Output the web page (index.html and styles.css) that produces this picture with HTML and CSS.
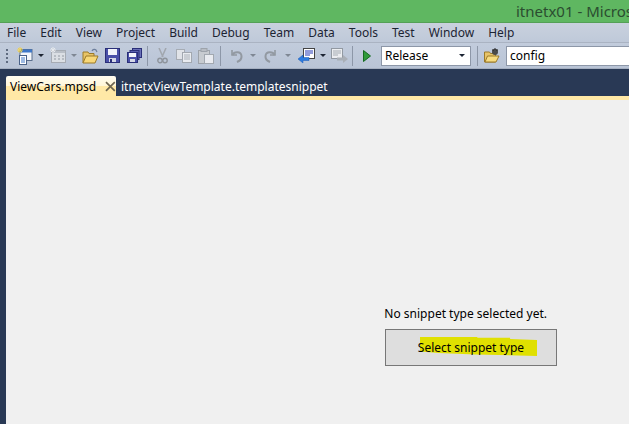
FILE: index.html
```html
<!DOCTYPE html>
<html lang="en">
<head>
    <meta charset="UTF-8">
    <title>itnetx01 - Microsoft Visual Studio</title>
    <link rel="stylesheet" href="styles.css">
</head>
<body>
    <div class="window">
        <div class="titlebar">
            <svg class="logo" width="16" height="9" viewBox="0 0 16 9">
                <path d="M8 4.5C6.5 2 5.5 1 3.8 1 2 1 1 2.5 1 4.5S2 8 3.8 8C5.5 8 6.5 7 8 4.5 9.5 2 10.5 1 12.2 1 14 1 15 2.5 15 4.5S14 8 12.2 8C10.5 8 9.5 7 8 4.5Z" fill="none" stroke="#2b3fa8" stroke-width="1.8"/>
                <path d="M1 4.5C1 6.5 2 8 3.8 8" fill="none" stroke="#2a8fa0" stroke-width="1.8"/>
            </svg>
            <span class="title-text">itnetx01 - Microsoft Visual Studio</span>
        </div>

        <div class="menubar">
            <span class="menu-item">File</span>
            <span class="menu-item">Edit</span>
            <span class="menu-item">View</span>
            <span class="menu-item">Project</span>
            <span class="menu-item">Build</span>
            <span class="menu-item">Debug</span>
            <span class="menu-item">Team</span>
            <span class="menu-item">Data</span>
            <span class="menu-item">Tools</span>
            <span class="menu-item">Test</span>
            <span class="menu-item">Window</span>
            <span class="menu-item">Help</span>
        </div>

        <div class="toolbar">
            <div class="grip"><i></i><i></i><i></i><i></i></div>

            <div class="tool">
                <svg width="17" height="18" viewBox="0 0 17 18">
                    <rect x="4" y="2.5" width="12" height="11" fill="#f4f7fb" stroke="#5b6f8c"/>
                    <rect x="4" y="2.5" width="12" height="3" fill="#3f78c8"/>
                    <rect x="3.5" y="8.5" width="7" height="9" fill="#fff" stroke="#4a6288"/>
                    <path d="M5 11h4M5 13h4M5 15h4" stroke="#3f78c8"/>
                    <path d="M1 3h6M4 0v6M2 1l4 4M6 1L2 5" stroke="#f2d24c"/>
                </svg>
            </div>
            <div class="drop drop-a"><b></b></div>

            <div class="tool faded">
                <svg width="17" height="17" viewBox="0 0 17 17">
                    <rect x="1.5" y="3.5" width="14" height="12" fill="#dfe2e6" stroke="#a4a9b0"/>
                    <rect x="2" y="4" width="13" height="2" fill="#b9bec6"/>
                    <path d="M4 9h2M8 9h2M12 9h2M4 12h2M8 12h2M12 12h2" stroke="#8e949c"/>
                    <path d="M0 3h6M3 0v6M1 1l4 4M5 1L1 5" stroke="#eceef0"/>
                </svg>
            </div>
            <div class="drop drop-b"><b class="grey"></b></div>

            <div class="tool">
                <svg width="17" height="16" viewBox="0 0 17 16">
                    <path d="M1 15V4h5l1 1.5h5V8" fill="#e8c468" stroke="#9c7a28"/>
                    <path d="M1 15l3-7h12l-3 7Z" fill="#f8d878" stroke="#9c7a28"/>
                    <path d="M10 3c1-2 3-2 4-1l1 2" fill="none" stroke="#6d7f9c" stroke-width="1.2"/>
                </svg>
            </div>
            <div class="tool">
                <svg width="15" height="15" viewBox="0 0 15 15">
                    <rect x="0.5" y="0.5" width="14" height="14" fill="#4a50a8" stroke="#2a2f78"/>
                    <rect x="3" y="1" width="9" height="6" fill="#f2f4fa"/>
                    <rect x="4" y="10" width="7" height="4" fill="#d4d8e6"/>
                    <rect x="5" y="11" width="2" height="3" fill="#2a2f78"/>
                </svg>
            </div>
            <div class="tool">
                <svg width="15" height="15" viewBox="0 0 15 15">
                    <rect x="5.5" y="0.5" width="9" height="9" fill="#6a70b8" stroke="#2a2f78"/>
                    <rect x="3" y="2.5" width="9" height="9" fill="#5a60b0" stroke="#2a2f78"/>
                    <rect x="0.5" y="4.5" width="10" height="10" fill="#4a50a8" stroke="#2a2f78"/>
                    <rect x="2" y="5" width="7" height="4" fill="#f2f4fa"/>
                    <rect x="3" y="11" width="5" height="3" fill="#d4d8e6"/>
                </svg>
            </div>

            <div class="sep"></div>

            <div class="tool faded">
                <svg width="11" height="16" viewBox="0 0 11 16">
                    <path d="M2 0l4 9M9 0L5 9" stroke="#9ea3aa" stroke-width="1.5"/>
                    <circle cx="3" cy="12.5" r="2.2" fill="none" stroke="#8a8f96" stroke-width="1.4"/>
                    <circle cx="8" cy="12.5" r="2.2" fill="none" stroke="#8a8f96" stroke-width="1.4"/>
                </svg>
            </div>
            <div class="tool faded">
                <svg width="16" height="14" viewBox="0 0 16 14">
                    <rect x="0.5" y="0.5" width="8" height="10" fill="#e4e6ea" stroke="#a4a9b0"/>
                    <rect x="6.5" y="3.5" width="9" height="10" fill="#eef0f3" stroke="#a0a5ac"/>
                    <path d="M8 6h6M8 8h6M8 10h6" stroke="#a8adb4"/>
                </svg>
            </div>
            <div class="tool faded">
                <svg width="16" height="16" viewBox="0 0 16 16">
                    <rect x="0.5" y="2.5" width="11" height="13" fill="#c9ccd0" stroke="#9a9fa6"/>
                    <rect x="3" y="0.5" width="6" height="3" fill="#b8bcc2" stroke="#9a9fa6"/>
                    <rect x="6.5" y="6.5" width="9" height="9" fill="#eef0f3" stroke="#a0a5ac"/>
                </svg>
            </div>

            <div class="sep sep-wide"></div>

            <div class="tool faded">
                <svg width="13" height="14" viewBox="0 0 13 14">
                    <path d="M2 1v5h5" fill="none" stroke="#8e949c" stroke-width="1.6"/>
                    <path d="M2.5 6C4 2.5 11 2 11.5 7c.3 3-2 5-4.5 6" fill="none" stroke="#8e949c" stroke-width="2"/>
                </svg>
            </div>
            <div class="drop drop-c"><b class="grey"></b></div>
            <div class="tool faded">
                <svg width="13" height="14" viewBox="0 0 13 14">
                    <path d="M11 1v5H6" fill="none" stroke="#8e949c" stroke-width="1.6"/>
                    <path d="M10.5 6C9 2.5 2 2 1.500 7c-.3 3 2 5 4.500 6" fill="none" stroke="#8e949c" stroke-width="2"/>
                </svg>
            </div>
            <div class="drop drop-d"><b class="grey"></b></div>

            <div class="tool">
                <svg width="17" height="16" viewBox="0 0 17 16">
                    <rect x="5.500" y="0.500" width="11" height="10" fill="#fff" stroke="#444"/>
                    <path d="M7 3h8M7 5h8M7 7h5" stroke="#2438b8"/>
                    <path d="M0 11l5-4v2.500h6v3H5V15Z" fill="#2e7ce0" stroke="#1a5ab8" stroke-width="0.500"/>
                </svg>
            </div>
            <div class="drop drop-e"><b></b></div>
            <div class="tool faded">
                <svg width="17" height="16" viewBox="0 0 17 16">
                    <rect x="0.500" y="0.500" width="11" height="10" fill="#f0f1f3" stroke="#8e949c"/>
                    <path d="M2 3h8M2 5h8M2 7h5" stroke="#a4a9b0"/>
                    <path d="M17 11l-5-4v2.500H6v3h6V15Z" fill="#a8adb4"/>
                </svg>
            </div>

            <div class="sep"></div>

            <div class="tool">
                <svg width="8" height="12" viewBox="0 0 8 12">
                    <path d="M0.500 0.500L7.500 6 0.500 11.500Z" fill="#2f9a3a" stroke="#156a20"/>
                </svg>
            </div>

            <div class="combo">
                <span class="combo-text">Release</span>
                <b></b>
            </div>
            <div class="sep sep-combo"></div>
            <div class="tool">
                <svg width="16" height="15" viewBox="0 0 16 15">
                    <path d="M0.500 14V4h5l1 1.500h5V14Z" fill="#e8c468" stroke="#9c7a28"/>
                    <path d="M1 14l2.500-6H15l-3 6Z" fill="#f8dc80" stroke="#9c7a28"/>
                    <circle cx="11" cy="4" r="3" fill="#4a4a4a"/>
                    <path d="M9 1v2M11 0v2M13 1v2" stroke="#222"/>
                </svg>
            </div>
            <div class="find-box">config</div>
        </div>

        <div class="tabstrip">
            <div class="tab active">
                <span>ViewCars.mpsd</span>
                <svg class="tab-close" width="11" height="11" viewBox="0 0 11 11">
                    <path d="M1 1l9 9M10 1l-9 9" stroke="#6f6650" stroke-width="1.7"/>
                </svg>
            </div>
            <div class="tab">itnetxViewTemplate.templatesnippet</div>
        </div>
        <div class="tab-accent"></div>

        <div class="editor">
            <p class="empty-text">No snippet type selected yet.</p>
            <div class="select-btn">
                <span class="marker"></span>
                <span class="select-label">Select snippet type</span>
            </div>
        </div>
    </div>
</body>
</html>
```

FILE: styles.css
```css
html, body {
    margin: 0;
    height: 100%;
    overflow: hidden;
}
body {
    font-family: 'Noto Sans', sans-serif;
    font-size: 12px;
    color: #000;
}
.window {
    display: flex;
    flex-direction: column;
    height: 424px;
    width: 629px;
    background: #293955;
}
.titlebar {
    display: flex;
    align-items: center;
    height: 22px;
    padding-left: 2px;
    background: #5fb761;
    border-bottom: 1px solid #54a056;
    overflow: hidden;
    white-space: nowrap;
}
.logo {
    margin-top: 1px;
}
.title-text {
    margin-left: 514px;
    font-size: 15px;
    color: #2b4d30;
}
.menubar {
    display: flex;
    align-items: center;
    height: 19px;
    padding-left: 7px;
    gap: 14px;
    background: linear-gradient(#c9d1de, #bfc9d9);
    border-bottom: 1px solid #aab3c2;
    color: #1c2433;
}
.toolbar {
    display: flex;
    align-items: center;
    height: 26px;
    background: linear-gradient(#c2ccdc, #b9c4d6);
    border-bottom: 1px solid #a5afc0;
    box-sizing: border-box;
    overflow: hidden;
}
.grip {
    display: flex;
    flex-direction: column;
    gap: 2px;
    margin-left: 6px;
    margin-right: 5px;
    width: 2px;
}
.grip i {
    display: block;
    width: 2px;
    height: 2px;
    background: #5f6b80;
}
.tool {
    display: flex;
    justify-content: center;
    align-items: center;
    flex: none;
    width: 22px;
}
.faded {
    opacity: 0.9;
}
.drop {
    display: flex;
    justify-content: center;
    flex: none;
}
.drop b, .combo b {
    width: 0;
    height: 0;
    border: 3.5px solid transparent;
    border-top: 3.5px solid #1c2433;
    border-bottom: 0;
}
.drop b.grey {
    border-top-color: #7f8794;
}
.drop-a { width: 12px; }
.drop-b { width: 10px; }
.drop-c { width: 12px; }
.drop-d { width: 14px; }
.drop-e { width: 11px; }
.sep {
    flex: none;
    width: 1px;
    height: 20px;
    margin: 0 3px 0 2px;
    background: #8d97a8;
}
.sep-wide {
    margin: 0 4px 0 3px;
}
.sep-combo {
    margin: 0 3px 0 6px;
}
.combo {
    display: flex;
    align-items: center;
    justify-content: space-between;
    flex: none;
    box-sizing: border-box;
    width: 90px;
    height: 20px;
    margin-left: 3px;
    padding: 0 5px 0 3px;
    background: #fff;
    border: 1px solid #8d97a8;
}
.find-box {
    flex: none;
    box-sizing: border-box;
    width: 130px;
    height: 20px;
    margin-left: 3px;
    padding-left: 3px;
    line-height: 18px;
    background: #fff;
    border: 1px solid #8d97a8;
}
.tabstrip {
    display: flex;
    align-items: flex-end;
    height: 27px;
    padding-left: 6px;
    background-color: #293955;
    color: #fff;
}
.tab {
    display: flex;
    align-items: center;
    height: 20px;
    padding-left: 5px;
    white-space: nowrap;
}
.tab.active {
    box-sizing: border-box;
    width: 110px;
    height: 20px;
    padding-left: 4px;
    border-radius: 2px 2px 0 0;
    background: linear-gradient(#fffcf0, #fff6d8 50%, #ffe8a6 51%);
    color: #000;
}
.tab-close {
    margin-left: 9px;
}
.tab-accent {
    height: 4px;
    margin-left: 6px;
    background: #ffe8a6;
}
.editor {
    flex: 1;
    display: flex;
    flex-direction: column;
    align-items: center;
    margin-left: 6px;
    padding: 205px 72px 0 0;
    background: #f0f0f0;
    align-items: flex-end;
}
.empty-text {
    margin: 0 10px 0 0;
    line-height: 17px;
}
.select-btn {
    position: relative;
    display: flex;
    align-items: center;
    justify-content: center;
    box-sizing: border-box;
    width: 172px;
    height: 37px;
    margin-top: 7px;
    border: 1px solid #777;
    background: #dedede;
}
.select-label {
    position: relative;
}
/* hand drawn highlighter stroke */
.marker {
    position: absolute;
    left: 34px;
    top: 7px;
    width: 117px;
    height: 19px;
    background: #e0e000;
    clip-path: polygon(0 0, 49% 0, 49% 4%, 77% 4%, 77% 10%, 100% 16%, 100% 100%, 47% 92%, 16% 84%, 0 76%);
}
```
